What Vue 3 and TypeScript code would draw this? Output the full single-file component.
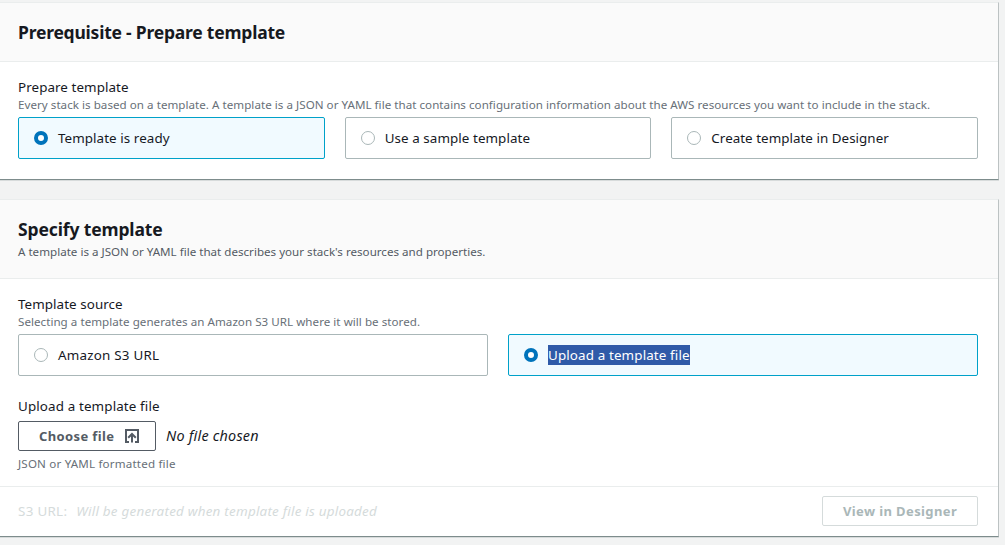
<script setup lang="ts">
import { ref } from 'vue'

interface Option {
  id: string
  label: string
  cls: string
}

const prepareOptions: Option[] = [
  { id: 'ready', label: 'Template is ready', cls: 't-ready' },
  { id: 'sample', label: 'Use a sample template', cls: 't-sample' },
  { id: 'designer', label: 'Create template in Designer', cls: 't-create' },
]
const sourceOptions: Option[] = [
  { id: 's3', label: 'Amazon S3 URL', cls: 't-s3' },
  { id: 'upload', label: 'Upload a template file', cls: 't-upload' },
]
const prepare = ref('ready')
const source = ref('upload')
</script>

<template>
  <main class="page">
    <section class="card">
      <header class="card-header">
        <h2>Prerequisite - Prepare template</h2>
      </header>
      <div class="card-body">
        <div class="label">Prepare template</div>
        <div class="hint">Every stack is based on a template. A template is a JSON or YAML file that contains configuration information about the AWS resources you want to include in the stack.</div>
        <div class="tiles">
          <div
            v-for="o in prepareOptions"
            :key="o.id"
            class="tile"
            :class="{ selected: prepare === o.id }"
            @click="prepare = o.id"
          >
            <span class="radio"></span>
            <span :class="o.cls">{{ o.label }}</span>
          </div>
        </div>
      </div>
    </section>

    <section class="card second">
      <header class="card-header tall">
        <h2>Specify template</h2>
        <p class="sub">A template is a JSON or YAML file that describes your stack's resources and properties.</p>
      </header>
      <div class="card-body">
        <div class="label">Template source</div>
        <div class="hint">Selecting a template generates an Amazon S3 URL where it will be stored.</div>
        <div class="tiles">
          <div
            v-for="o in sourceOptions"
            :key="o.id"
            class="tile"
            :class="{ selected: source === o.id }"
            @click="source = o.id"
          >
            <span class="radio"></span>
            <span :class="[o.cls, { marked: o.id === 'upload' }]">{{ o.label }}</span>
          </div>
        </div>
        <div class="label upload-label">Upload a template file</div>
        <div class="file-row">
          <button class="btn choose">
            <span>Choose file</span>
            <svg width="16" height="16" viewBox="0 0 16 16" fill="none" stroke="currentColor" stroke-width="2">
              <path d="M5 14H2V2h12v12h-3" />
              <path d="M8 14.5V6.5M4.2 9.8L8 6l3.8 3.8" />
            </svg>
          </button>
          <em class="file-name">No file chosen</em>
        </div>
        <div class="hint format">JSON or YAML formatted file</div>
      </div>
      <footer class="card-footer">
        <div class="url">
          <span class="url-key">S3 URL:</span>
          <em class="url-value">Will be generated when template file is uploaded</em>
        </div>
        <button class="btn view" disabled>View in Designer</button>
      </footer>
    </section>
  </main>
</template>

<style>
body {
  background: #f2f3f3;
}
</style>

<style scoped>
.page {
  box-sizing: border-box;
  height: 545px;
  padding: 2px 6px 0 0;
  overflow: hidden;
  background: #f2f3f3;
  color: #16191f;
  font-family: "Noto Sans", "Open Sans", sans-serif;
  font-size: 13.4px;
  line-height: 20px;
  letter-spacing: 0.07px;
  white-space: nowrap;
}
.card {
  box-sizing: border-box;
  height: 178px;
  border-top: 1px solid #eaeded;
  border-right: 1px solid #bcc2c3;
  border-bottom: 1px solid #7d8c8c;
  background: #fff;
  box-shadow: 0 1px 0 #d7dbdb;
}
.card.second {
  height: 338px;
  margin-top: 19px;
}
.card-header {
  box-sizing: border-box;
  height: 59px;
  padding: 18px 18px 0;
  border-bottom: 1px solid #eaeded;
  background: #fafafa;
}
.card-header.tall {
  height: 79px;
}
h2 {
  margin: 0;
  font-size: 17.5px;
  line-height: 22px;
  font-weight: 700;
  letter-spacing: -0.22px;
}
.tall h2 {
  letter-spacing: -0.13px;
}
.sub {
  margin: 3px 0 0;
  font-size: 11.6px;
  line-height: 18px;
  letter-spacing: 0.005px;
  color: #545b64;
}
.card-body {
  padding: 15px 20px 0 18px;
}
.label {
  height: 20px;
}
.hint {
  height: 16px;
  line-height: 16px;
  font-size: 11.6px;
  letter-spacing: 0.035px;
  color: #687078;
}
.tiles {
  display: flex;
  gap: 20px;
  margin-top: 4px;
}
.tile {
  box-sizing: border-box;
  display: flex;
  flex: 1 1 0;
  align-items: center;
  gap: 10px;
  height: 42px;
  padding: 0 15px;
  border: 1px solid #aab7b8;
  border-radius: 2px;
}
.tile.selected {
  border-color: #00a1c9;
  background: #f1faff;
}
.t-create {
  letter-spacing: 0.03px;
}
.t-s3 {
  letter-spacing: 0.22px;
}
.t-upload {
  letter-spacing: 0.13px;
}
.radio {
  box-sizing: border-box;
  width: 14px;
  height: 14px;
  border: 1px solid #aab7b8;
  border-radius: 50%;
  background: #fff;
}
.selected .radio {
  border: 4px solid #0073bb;
}
.marked {
  background: #2f5aa8;
  color: #fff;
}
.upload-label {
  margin-top: 20px;
  letter-spacing: 0.13px;
}
.file-row {
  display: flex;
  align-items: center;
  gap: 10px;
  height: 30px;
  margin-top: 5px;
}
.file-name {
  font-size: 14.4px;
  letter-spacing: 0.23px;
}
.btn {
  box-sizing: border-box;
  display: flex;
  align-items: center;
  justify-content: space-between;
  height: 30px;
  padding: 0 15px 0 20px;
  border: 1px solid #545b64;
  border-radius: 2px;
  background: #fff;
  color: #545b64;
  font: 700 13px/20px "Noto Sans", "Open Sans", sans-serif;
  letter-spacing: 0.38px;
}
.choose {
  width: 138px;
}
.view {
  width: 156px;
  padding: 0 20px;
  border-color: #d5dbdb;
  color: #aab7b8;
}
.format {
  margin-top: 5px;
  letter-spacing: 0.18px;
}
.card-footer {
  box-sizing: border-box;
  display: flex;
  align-items: center;
  justify-content: space-between;
  height: 50px;
  margin-top: 14px;
  padding: 0 20px 2px 18px;
  border-top: 1px solid #eaeded;
  color: #d5dbdb;
}
.url {
  display: flex;
  gap: 9px;
}
.url-key {
  letter-spacing: 0.3px;
}
.url-value {
  letter-spacing: 0.24px;
}
</style>
